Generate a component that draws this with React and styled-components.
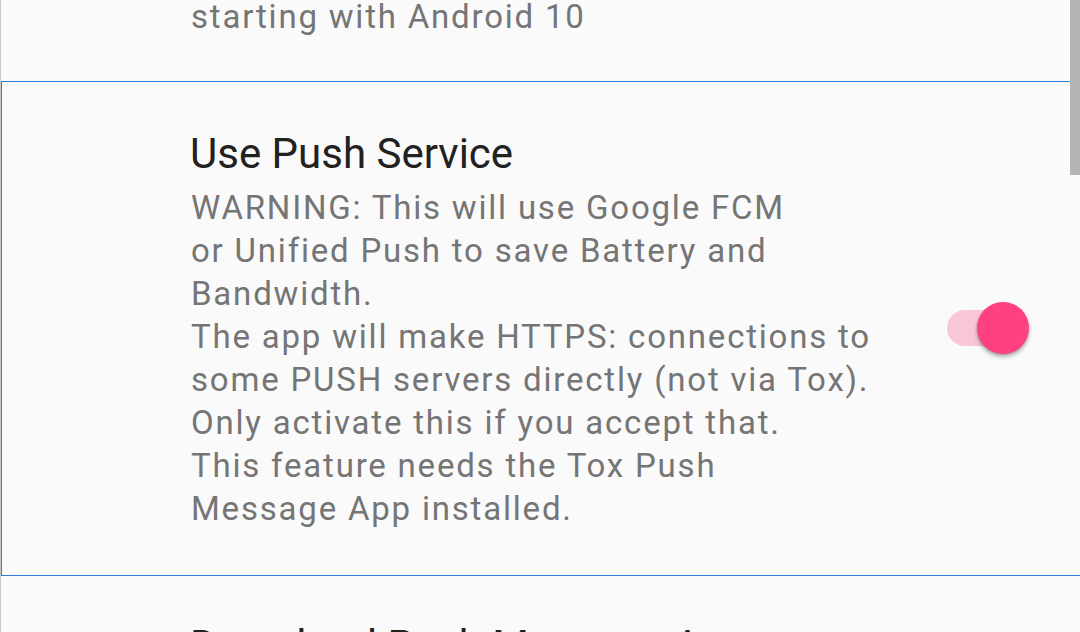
import React from "react";
import styled, { createGlobalStyle, css } from "styled-components";

const Global = createGlobalStyle`
  html, body { margin: 0; padding: 0; background: #fafafa; overflow: hidden; }
  body { font-family: Roboto, "Noto Sans", sans-serif; }
`;

const Screen = styled.div`
  position: relative;
  width: 1080px;
  height: 632px;
  overflow: hidden;
  box-sizing: border-box;
  border-left: 1px solid #c9c9c9;
  background: #fafafa;
`;

const List = styled.div`
  display: flex;
  flex-direction: column;
  margin-top: -5.5px;
`;

const Item = styled.div`
  display: flex;
  align-items: center;
  padding: ${(p) => p.$pad};
  ${(p) =>
    p.$focused &&
    css`
      border-top: 1px solid #2a7ddc;
      border-bottom: 1px solid #2a7ddc;
      border-left: 1px solid #2a7ddc;
    `}
`;

const TextCol = styled.div`
  flex: 1;
  display: flex;
  flex-direction: column;
`;

const Title = styled.div`
  font-size: 42px;
  line-height: 49px;
  color: #212121;
  margin-left: -1px;
`;

const Summary = styled.div`
  font-size: 33px;
  line-height: 43px;
  letter-spacing: 1.8px;
  color: #757575;
  margin-top: ${(p) => (p.$first ? "0" : "8.7px")};
  white-space: pre-line;
`;

const Widget = styled.div`
  padding-right: 51px;
  margin-bottom: 3px;
  display: flex;
  justify-content: flex-end;
  align-items: center;
`;

const Switch = styled.div`
  position: relative;
  width: 82px;
  height: 52px;
`;

const Track = styled.div`
  position: absolute;
  left: 0;
  top: 8px;
  width: 78px;
  height: 36px;
  border-radius: 18px;
  background: #f9c6d9;
`;

const Thumb = styled.div`
  position: absolute;
  right: 0;
  top: 0;
  width: 52px;
  height: 52px;
  border-radius: 50%;
  background: #ff4081;
  box-shadow: 0 3px 4px rgba(0, 0, 0, 0.28), 0 1px 2px rgba(0, 0, 0, 0.15);
`;

const Scrollbar = styled.div`
  position: absolute;
  right: 0;
  top: 0;
  width: 10px;
  height: 175px;
  background: #b4b4b4;
`;

export default function App() {
  return (
    <>
      <Global />
      <Screen>
        <List>
          <Item $pad="0 0 43.5px 190px">
            <TextCol>
              <Summary $first>starting with Android 10</Summary>
            </TextCol>
          </Item>
          <Item $focused $pad="46.5px 0 44.8px 189px">
            <TextCol>
              <Title>Use Push Service</Title>
              <Summary>
                {"WARNING: This will use Google FCM\nor Unified Push to save Battery and\nBandwidth.\nThe app will make HTTPS: connections to\nsome PUSH servers directly (not via Tox).\nOnly activate this if you accept that.\nThis feature needs the Tox Push\nMessage App installed."}
              </Summary>
            </TextCol>
            <Widget>
              <Switch>
                <Track />
                <Thumb />
              </Switch>
            </Widget>
          </Item>
          <Item $pad="45px 0 44px 190px">
            <TextCol>
              <Title>Download Push Message App</Title>
            </TextCol>
          </Item>
        </List>
        <Scrollbar />
      </Screen>
    </>
  );
}
